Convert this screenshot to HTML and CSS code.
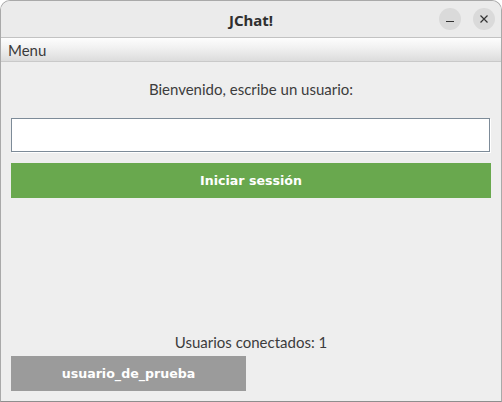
FILE: index.html
```html
<!DOCTYPE html>
<html lang="es">
<head>
<meta charset="utf-8">
<title>JChat!</title>
<link rel="stylesheet" href="styles.css">
</head>
<body>
<div class="window">
  <header class="titlebar">
    <div class="title">JChat!</div>
    <div class="controls">
      <button class="ctl" aria-label="Minimizar">
        <svg width="10" height="10" viewBox="0 0 10 10"><path d="M1 7.5h8" stroke="#333" stroke-width="1.2"/></svg>
      </button>
      <button class="ctl" aria-label="Cerrar">
        <svg width="10" height="10" viewBox="0 0 10 10"><path d="M1.5 1.5l7 7M8.5 1.5l-7 7" stroke="#333" stroke-width="1.2"/></svg>
      </button>
    </div>
  </header>
  <nav class="menubar"><span class="menu-item">Menu</span></nav>
  <main class="content">
    <p class="label welcome">Bienvenido, escribe un usuario:</p>
    <input class="field" type="text">
    <button class="btn btn-login">Iniciar sessión</button>
    <div class="spacer"></div>
    <p class="label online">Usuarios conectados: 1</p>
    <div class="users">
      <button class="btn btn-user">usuario_de_prueba</button>
    </div>
  </main>
</div>
</body>
</html>
```

FILE: styles.css
```css
* { box-sizing: border-box; }
html, body { margin: 0; padding: 0; background: #ffffff; }
body { width: 502px; height: 402px; overflow: hidden; }

.window {
  width: 502px;
  height: 402px;
  border: 1px solid #a9a9a9;
  border-bottom-color: #8e8e8e;
  border-radius: 10px 10px 0 0;
  background: #eeeeee;
  display: flex;
  flex-direction: column;
  overflow: hidden;
}

.titlebar {
  height: 37px;
  flex: none;
  background: #ebebeb;
  border-bottom: 1px solid #c2c2c2;
  display: flex;
  align-items: center;
  justify-content: center;
  position: relative;
}
.title {
  font-family: "Noto Sans", "DejaVu Sans", sans-serif;
  font-weight: 700;
  font-size: 15px;
  color: #2f2f2f;
  padding-top: 1px;
}
.controls {
  position: absolute;
  right: 6px;
  top: 7px;
  display: flex;
  gap: 12px;
}
.ctl {
  width: 22px;
  height: 22px;
  border-radius: 50%;
  border: none;
  padding: 0;
  background: #dadada;
  display: flex;
  align-items: center;
  justify-content: center;
}

.menubar {
  height: 24px;
  flex: none;
  background: linear-gradient(#fdfdfd, #f2f2f2 40%, #dcdcdc);
  border-bottom: 1px solid #c9c9c9;
  display: flex;
  align-items: center;
  padding-left: 7px;
}
.menu-item {
  font-family: Lato, "Open Sans", sans-serif;
  font-size: 15px;
  color: #3a3a3a;
  line-height: 18px;
}

.content {
  flex: 1;
  display: flex;
  flex-direction: column;
  padding: 18px 10px 10px 10px;
}
.label {
  margin: 0;
  font-family: Lato, "Open Sans", sans-serif;
  font-size: 15px;
  line-height: 18px;
  color: #3c3c3c;
  text-align: center;
}
.field {
  margin-top: 20px;
  width: 479px;
  height: 34px;
  border: 1px solid #7d8b98;
  background: #ffffff;
  box-shadow: 1px 1px 0 #ffffff;
  outline: none;
  padding: 0 4px;
}
.btn {
  border: none;
  height: 35px;
  color: #ffffff;
  font-family: "DejaVu Sans", Verdana, sans-serif;
  font-weight: 700;
  font-size: 12.6px;
  padding: 0;
}
.btn-login {
  margin-top: 11px;
  width: 480px;
  background: #69a84e;
}
.spacer { flex: 1; }
.online { margin-bottom: 5px; }
.users { display: flex; }
.btn-user {
  width: 235px;
  background: #9b9b9b;
}
```
